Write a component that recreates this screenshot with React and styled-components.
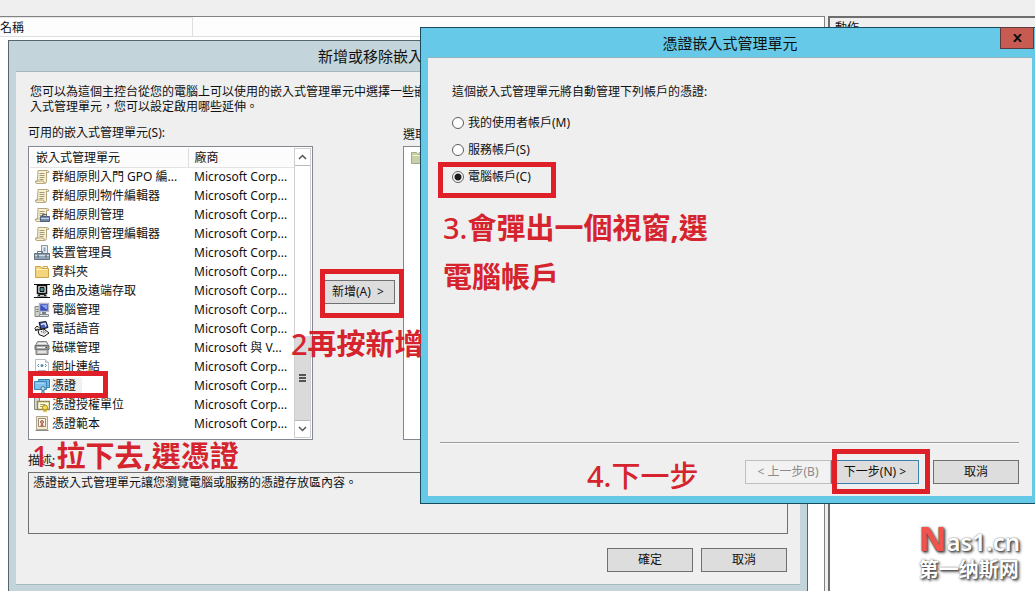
import React, { useState } from 'react'
import styled, { createGlobalStyle } from 'styled-components'

const GlobalStyle = createGlobalStyle`
* {
  box-sizing: border-box;
}
body {
  margin: 0;
  overflow: hidden;
  background: #efefef;
}
body, button, input, textarea {
  font-family: "Noto Sans", "Noto Sans CJK TC", sans-serif;
  font-size: 12px;
  line-height: 16px;
  color: #111;
}
`

const Desktop = styled.div`
  position: relative;
  display: flex;
  flex-direction: column;
  height: 100vh;
  overflow: hidden;
`

const Toolbar = styled.div`
  flex: none;
  height: 16px;
  background: #efefef;
`

const Panes = styled.div`
  display: flex;
  flex: 1;
  gap: 3px;
`

const ResultPane = styled.main`
  flex: 1;
  background: #fff;
  border-top: 1px solid #828282;
  border-right: 1px solid #828282;
`

const PaneHeader = styled.div`
  display: flex;
  height: 20px;
  border-bottom: 1px solid #dcdfe1;
  background: #fdfdfd;
`

const PaneColumn = styled.div`
  width: 193px;
  padding-top: 2px;
  border-top: 1px solid #e5e5e5;
  border-right: 1px solid #dcdfe1;
`

const ActionsPane = styled.aside`
  width: 207px;
  background: #fff;
  border-top: 2px solid #6e6e6e;
  border-left: 2px solid #6e6e6e;
`

const ActionsTitle = styled.div`
  padding: 2px 5px;
  background: #efefef;
`

const Window = styled.section`
  position: absolute;
  display: flex;
  flex-direction: column;
  border: 1px solid ${(p) => (p.$active ? '#174a5c' : '#56666c')};
  background: ${(p) => (p.$active ? '#66c9e8' : '#c3d5da')};
  padding: 0 7px 7px;
`

const SnapinWindow = styled(Window)`
  left: 8px;
  right: 227px;
  top: 40px;
`

const WizardWindow = styled(Window)`
  left: 420px;
  right: -5px;
  top: 27px;
`

const TitleBar = styled.header`
  position: relative;
  display: flex;
  align-items: center;
  justify-content: center;
  height: ${(p) => p.$height}px;
`

const Title = styled.h1`
  margin: 0;
  font-size: 15px;
  font-weight: 400;
  line-height: 18px;
`

const CloseButton = styled.button`
  position: absolute;
  top: -1px;
  right: -2px;
  display: flex;
  align-items: center;
  justify-content: center;
  width: 34px;
  height: 22px;
  padding: 0;
  border: 1px solid #5b3b3c;
  background: #c75b52;
`

const SnapinBody = styled.div`
  padding: 12px 12px 12px;
  border-top: 1px solid #a9b7bb;
  border-bottom: 1px solid #a5bac0;
  background: #efefef;
`

const Intro = styled.p`
  margin: 0 2px 10px;
  line-height: 15px;
  white-space: nowrap;
`

const Chooser = styled.div`
  display: flex;
`

const Available = styled.div`
  width: 285px;
`

const AddArea = styled.div`
  display: flex;
  align-items: center;
  justify-content: center;
  width: 90px;
  padding-top: 20px;
`

const Selected = styled.div`
  flex: 1;
`

const Caption = styled.div`
  height: 22px;
  padding-top: ${(p) => p.$drop}px;
`

const ListBox = styled.div`
  display: flex;
  height: 294px;
  padding: 1px;
  border: 1px solid #828790;
  background: #fff;
`

const SnapinTable = styled.table`
  flex: 1;
  align-self: flex-start;
  table-layout: fixed;
  border-collapse: collapse;

  th, td {
    height: 19px;
    padding: 0 0 0 6px;
    text-align: left;
    font-weight: 400;
    white-space: nowrap;
  }
  th {
    padding-top: 1px;
    background: #fcfcfc;
    border-bottom: 1px solid #e4e4e4;
  }
  th:first-child {
    width: 158px;
    border-right: 1px solid #dedede;
  }
  td:first-child {
    padding-left: 4px;
  }
`

const NameCell = styled.div`
  display: flex;
  align-items: center;
  gap: 1px;

  svg {
    flex: none;
  }
  span {
    padding: 0 6px 0 1px;
    background: ${(p) => (p.$selected ? '#f0f0f0' : 'transparent')};
  }
`

const ScrollBar = styled.div`
  display: flex;
  flex-direction: column;
  width: 17px;
  border: 1px solid #cfcfcf;
`

const ScrollButton = styled.button`
  display: flex;
  align-items: center;
  justify-content: center;
  height: 17px;
  padding: 0;
  border: 0;
  border-${(p) => p.$edge}: 1px solid #b9b9b9;
  background: #fff;
`

const ScrollTrack = styled.div`
  display: flex;
  flex: 1;
  flex-direction: column;
  justify-content: flex-end;
`

const ScrollThumb = styled.div`
  display: flex;
  align-items: center;
  justify-content: center;
  height: 84px;
  background: #dadada;
`

const SelectedRoot = styled.div`
  padding: 2px 5px;
`

const PushButton = styled.button`
  width: ${(p) => p.$width || 86}px;
  height: 24px;
  padding: 0;
  border: 1px solid ${(p) => (p.$primary ? '#3c7fb1' : '#707070')};
  background: #dddddd;
  white-space: pre;

  &:disabled {
    border-color: #bfbfbf;
    background: #f2f2f2;
    color: #8b8b8b;
  }
`

const NextButton = styled(PushButton)`
  margin-right: 14px;
`

const Field = styled.label`
  display: block;
  padding-top: 13px;
`

const Description = styled.textarea`
  display: block;
  width: 100%;
  height: 62px;
  margin-top: 3px;
  padding: 2px 4px;
  border: 1px solid #707070;
  background: transparent;
  resize: none;
  outline: none;
`

const Footer = styled.div`
  display: flex;
  justify-content: flex-end;
  gap: ${(p) => p.$gap}px;
  padding: ${(p) => p.$pad};
`

const WizardBody = styled.div`
  display: flex;
  flex-direction: column;
  height: 439px;
  padding: 26px 13px 12px 12px;
  border-top: 1px solid #8fb3c0;
  background: #efefef;
`

const Choices = styled.fieldset`
  display: flex;
  flex: 1;
  flex-direction: column;
  gap: 11px;
  margin: 0 12px;
  padding: 0;
  border: 0;

  legend {
    padding: 0 0 15px;
  }
`

const Choice = styled.label`
  display: flex;
  align-items: center;
  gap: 4px;
`

const Radio = styled.input`
  appearance: none;
  width: 12px;
  height: 12px;
  margin: 0;
  border: 1px solid #5d5d5d;
  border-radius: 50%;
  background: #fff;

  &:checked {
    background: radial-gradient(circle, #1c1c1c 3px, #fff 4px);
  }
`

const Divider = styled.hr`
  width: 100%;
  margin: 0;
  border: 0;
  border-top: 1px solid #9c9c9c;
  border-bottom: 1px solid #fbfbfb;
`

const Highlight = styled.div`
  position: absolute;
  left: ${(p) => p.$x}px;
  top: ${(p) => p.$y}px;
  width: ${(p) => p.$w}px;
  height: ${(p) => p.$h}px;
  border: 5px solid #df2029;
  pointer-events: none;
`

const Note = styled.p`
  position: absolute;
  left: ${(p) => p.$x}px;
  top: ${(p) => p.$y}px;
  margin: 0;
  color: #d5242e;
  font-size: 29px;
  font-weight: 500;
  line-height: 49px;
  white-space: nowrap;
  pointer-events: none;
`

const Watermark = styled.div`
  position: absolute;
  right: 15px;
  bottom: 9px;
  color: #fff;
  font-family: "Noto Sans", "Noto Sans CJK SC", sans-serif;
  font-weight: 700;
  text-shadow: 1px 1px 2px #444, 2px 2px 3px #777, 0 0 2px #888;
`

const SiteName = styled.div`
  font-size: 24px;
  font-weight: 600;
  line-height: 32px;

  b {
    color: #f4524d;
    font-size: 34px;
    font-weight: 700;
  }
`

const SiteSlogan = styled.div`
  font-size: 20px;
  line-height: 24px;
`

const Icon = ({ children }) => (
  <svg width="16" height="16" viewBox="0 0 16 16" aria-hidden="true">
    {children}
  </svg>
)

const Scroll = () => (
  <g>
    <path d="M4 1.500h9.500q1.500 0 1.200 2h-2.200v9q0 2-2 2H3q-2 0-1.500-2.500h2z" fill="#f8f0d2" stroke="#b5a67c" />
    <path d="M12.500 3.500V2.500M2 12h7.500q0 2 1.500 2" fill="none" stroke="#b5a67c" />
    <path d="M5.500 4.500h5M5.500 6.500h5M5.500 8.500h5M5.500 10.500h4" stroke="#a39a7c" />
  </g>
)

const Folder = ({ fill = '#f3d67c', edge = '#c9a44a' }) => (
  <g>
    <path d="M1.500 13.500v-11h5l1.500 2h6.500v9z" fill={fill} stroke={edge} />
    <path d="M9 2.500h4.500v2H9z" fill="#fff6cf" stroke={edge} />
    <path d="M2.500 5.500h11" stroke="#fff0b8" />
  </g>
)

const Seal = () => (
  <g>
    <path d="M10 11l-1 4.500 2-1 2 1-1-4.500z" fill="#d5b632" />
    <circle cx="11" cy="10.500" r="2.500" fill="#f4dc58" stroke="#a98a1e" />
  </g>
)

const icons = {
  scroll: <Scroll />,
  scrollTool: (
    <g>
      <Scroll />
      <path d="M8.500 9.500V7.500h4v2" fill="none" stroke="#55616f" />
      <path d="M6.500 9.500h9v5h-9z" fill="#7288a8" stroke="#4c5f7d" />
      <path d="M7 11.500h8" stroke="#c9d3e0" />
    </g>
  ),
  device: (
    <g>
      <path d="M7.500.5h6v9h-6z" fill="#e6edf3" stroke="#8796a3" />
      <path d="M9.500 2.500h2v4h-2z" fill="#8ba3b8" />
      <path d="M3.500 9V6.500h5V9" fill="none" stroke="#64717e" />
      <path d="M.5 8.500h15v6H.5z" fill="#93a5b7" stroke="#62717f" />
      <path d="M1 10.500h14" stroke="#d1dce6" />
      <path d="M4 9.500v3M12 9.500v3" stroke="#45515c" />
    </g>
  ),
  folder: <Folder />,
  routing: (
    <g>
      <path d="M0 1.500h16M0 14.500h16" stroke="#111" />
      <path d="M3.500 2.500h9v8h-9z" fill="#dfe5e5" stroke="#111" strokeWidth="1.500" />
      <path d="M6 4.500h4v4H6z" fill="#4b8e95" stroke="#111" />
      <path d="M5 11l-2 2.500h10.500L11 11z" fill="#222" />
      <path d="M6 12.500h4" stroke="#d5d5d5" />
    </g>
  ),
  computer: (
    <g>
      <path d="M1 4.500h5v10H1z" fill="#cfd2cc" stroke="#808780" />
      <path d="M5.500 1.500h9v8h-9z" fill="#3b50bd" stroke="#b3b8c4" strokeWidth="1.500" />
      <path d="M7 3l5 4h1V3z" fill="#8aa1f0" />
      <path d="M8 10h4v2H8z" fill="#777f8a" />
      <path d="M5.500 12.500h9v2h-9z" fill="#e2e3df" stroke="#858b90" />
      <path d="M2.500 7.500h2M2.500 9.500h2" stroke="#6f7673" />
    </g>
  ),
  phone: (
    <g>
      <path d="M5 1.500l7-1 2 6-7 2z" fill="#445ab0" stroke="#111" />
      <path d="M7 3.500l4-1 1 3" fill="none" stroke="#d3e1ff" strokeWidth="1.500" />
      <path d="M1 7.500q1-3 3-2l2 2-1.500 1.500L3 8l-1 2z" fill="#e6e6e6" stroke="#222" />
      <path d="M4 9l6-1 5 4-5 3.500-5-2z" fill="#f4f4f4" stroke="#111" />
      <path d="M7 10.500l4 2M9 9.500l3 2" stroke="#222" strokeDasharray="1 1" />
    </g>
  ),
  disk: (
    <g>
      <path d="M3.500 1.500h9l2 4h-13z" fill="#cdcdcd" stroke="#858585" />
      <path d="M1 5.500h14v4H1z" fill="#9a9a9a" stroke="#6a6a6a" />
      <path d="M4 3.500h8" stroke="#f3f3f3" />
      <path d="M2 9.500h12v5H2z" fill="#bdbdbd" stroke="#757575" />
      <path d="M3 7.500h8M4 12h8" stroke="#eee" strokeWidth="1.500" />
      <path d="M12 7.500h1" stroke="#333" />
    </g>
  ),
  link: (
    <g>
      <path d="M1.500.5h10l3 3v12h-13z" fill="#fff" stroke="#b4bfc8" />
      <path d="M11.500.5v3h3" fill="#dce5ec" stroke="#b4bfc8" />
      <path d="M5 5L3.500 6.500 5 8M11 5l1.500 1.500L11 8" fill="none" stroke="#597fa4" />
      <circle cx="8" cy="6.500" r="1.500" fill="#4f91a3" />
      <path d="M4 11.500h8" stroke="#a4b4c3" />
    </g>
  ),
  cert: (
    <g>
      <path d="M4.500 1.500h11v8h-11z" fill="#6db7e3" stroke="#337eaf" />
      <path d="M.5 3.500h12v8H.5z" fill="#7fc2ec" stroke="#3b86b5" />
      <path d="M2 5.500h8" stroke="#a4d8f5" />
      <path d="M8 11l-1 4.500 2-1 2 1-1-4.500z" fill="#6194b0" />
      <circle cx="9" cy="10.500" r="2" fill="#b6dfed" stroke="#467e9b" />
    </g>
  ),
  authority: (
    <g>
      <path d="M.5.5h5v12h-5z" fill="#d5d7d6" stroke="#858b89" />
      <path d="M3.500 4.500h12v8h-12z" fill="#fffbdc" stroke="#97864c" strokeWidth="1.500" />
      <path d="M6 7.500h5M6 9.500h3" stroke="#a1a076" />
      <Seal />
    </g>
  ),
  template: (
    <g>
      <path d="M2.500.5h11v13h-11z" fill="#f3ead3" stroke="#b0a48c" />
      <path d="M4.500 2.500h7v8h-7z" fill="#fffaf0" stroke="#a08974" />
      <circle cx="8" cy="6" r="1.500" fill="#e4b59c" stroke="#a35645" />
      <path d="M7 8l-1 3 2-1 2 1-1-3" fill="#b66b56" />
      <path d="M1.500 14.500h13" stroke="#8d8d86" />
    </g>
  ),
}

const CORP = 'Microsoft Corp...'

const snapins = [
  { icon: 'scroll', name: '群組原則入門 GPO 編...', vendor: CORP },
  { icon: 'scroll', name: '群組原則物件編輯器', vendor: CORP },
  { icon: 'scrollTool', name: '群組原則管理', vendor: CORP },
  { icon: 'scroll', name: '群組原則管理編輯器', vendor: CORP },
  { icon: 'device', name: '裝置管理員', vendor: CORP },
  { icon: 'folder', name: '資料夾', vendor: CORP },
  { icon: 'routing', name: '路由及遠端存取', vendor: CORP },
  { icon: 'computer', name: '電腦管理', vendor: CORP },
  { icon: 'phone', name: '電話語音', vendor: CORP },
  { icon: 'disk', name: '磁碟管理', vendor: 'Microsoft 與 V...' },
  { icon: 'link', name: '網址連結', vendor: CORP },
  { icon: 'cert', name: '憑證', vendor: CORP },
  { icon: 'authority', name: '憑證授權單位', vendor: CORP },
  { icon: 'template', name: '憑證範本', vendor: CORP },
]

const accounts = ['我的使用者帳戶(M)', '服務帳戶(S)', '電腦帳戶(C)']

const Chevron = ({ d }) => (
  <svg width="9" height="6" viewBox="0 0 9 6" aria-hidden="true">
    <path d={d} fill="none" stroke="#555" strokeWidth="1.500" />
  </svg>
)

const SnapinList = () => (
  <ListBox>
    <SnapinTable>
      <thead>
        <tr>
          <th>嵌入式管理單元</th>
          <th>廠商</th>
        </tr>
      </thead>
      <tbody>
        {snapins.map((item) => (
          <tr key={item.name}>
            <td>
              <NameCell $selected={item.name === '憑證'}>
                <Icon>{icons[item.icon]}</Icon>
                <span>{item.name}</span>
              </NameCell>
            </td>
            <td>{item.vendor}</td>
          </tr>
        ))}
      </tbody>
    </SnapinTable>
    <ScrollBar>
      <ScrollButton $edge="bottom" aria-label="向上捲動">
        <Chevron d="M1 5l3.500-3.500L8 5" />
      </ScrollButton>
      <ScrollTrack>
        <ScrollThumb>
          <svg width="7" height="9" viewBox="0 0 7 9" aria-hidden="true">
            <path d="M0 1h7M0 4h7M0 7h7" stroke="#555" strokeWidth="2" />
          </svg>
        </ScrollThumb>
      </ScrollTrack>
      <ScrollButton $edge="top" aria-label="向下捲動">
        <Chevron d="M1 1l3.500 3.500L8 1" />
      </ScrollButton>
    </ScrollBar>
  </ListBox>
)

const SnapinDialog = () => (
  <SnapinWindow>
    <TitleBar $height={30}>
      <Title>新增或移除嵌入式管理單元</Title>
    </TitleBar>
    <SnapinBody>
      <Intro>
        您可以為這個主控台從您的電腦上可以使用的嵌入式管理單元中選擇一些嵌
        <br />
        入式管理單元，您可以設定啟用哪些延伸。
      </Intro>
      <Chooser>
        <Available>
          <Caption $drop={1}>可用的嵌入式管理單元(S):</Caption>
          <SnapinList />
        </Available>
        <AddArea>
          <PushButton $width={74}>{'新增(A)  >'}</PushButton>
        </AddArea>
        <Selected>
          <Caption $drop={3}>選取</Caption>
          <ListBox>
            <SelectedRoot>
              <Icon>
                <Folder fill="#c9cfa9" edge="#a3a98a" />
              </Icon>
            </SelectedRoot>
          </ListBox>
        </Selected>
      </Chooser>
      <Field>
        描述:
        <Description readOnly value="憑證嵌入式管理單元讓您瀏覽電腦或服務的憑證存放區內容。" />
      </Field>
      <Footer $gap={8} $pad="14px 1px 0 0">
        <PushButton>確定</PushButton>
        <PushButton>取消</PushButton>
      </Footer>
    </SnapinBody>
  </SnapinWindow>
)

const WizardDialog = () => {
  const [account, setAccount] = useState(accounts[2])

  return (
    <WizardWindow $active>
      <TitleBar $height={29}>
        <Title>憑證嵌入式管理單元</Title>
        <CloseButton aria-label="關閉">
          <svg width="9" height="8" viewBox="0 0 9 8" aria-hidden="true">
            <path d="M1 0l7 8M8 0L1 8" stroke="#111" strokeWidth="2" />
          </svg>
        </CloseButton>
      </TitleBar>
      <WizardBody>
        <Choices>
          <legend>這個嵌入式管理單元將自動管理下列帳戶的憑證:</legend>
          {accounts.map((name) => (
            <Choice key={name}>
              <Radio
                type="radio"
                name="account"
                checked={account === name}
                onChange={() => setAccount(name)}
              />
              {name}
            </Choice>
          ))}
        </Choices>
        <Divider />
        <Footer $gap={0} $pad="16px 0 0">
          <PushButton disabled>{'< 上一步(B)'}</PushButton>
          <NextButton $primary $width={88}>{'下一步(N) >'}</NextButton>
          <PushButton>取消</PushButton>
        </Footer>
      </WizardBody>
    </WizardWindow>
  )
}

const App = () => (
  <>
    <GlobalStyle />
    <Desktop>
      <Toolbar />
      <Panes>
        <ResultPane>
          <PaneHeader>
            <PaneColumn>名稱</PaneColumn>
          </PaneHeader>
        </ResultPane>
        <ActionsPane>
          <ActionsTitle>動作</ActionsTitle>
        </ActionsPane>
      </Panes>

      <SnapinDialog />
      <WizardDialog />

      <Highlight $x={28} $y={371} $w={80} $h={27} />
      <Highlight $x={320} $y={269} $w={84} $h={49} />
      <Highlight $x={438} $y={162} $w={118} $h={36} />
      <Highlight $x={832} $y={449} $w={98} $h={45} />

      <Note $x={32} $y={431}>
        1.<b>拉下去,選憑證</b>
      </Note>
      <Note $x={291} $y={319}>
        2<b>再按新增</b>
      </Note>
      <Note $x={443} $y={203}>
        3.<b>會彈出一個視窗,選</b>
        <br />
        <b>電腦帳戶</b>
      </Note>
      <Note $x={587} $y={451}>4.下一步</Note>

      <Watermark>
        <SiteName>
          <b>N</b>as1.cn
        </SiteName>
        <SiteSlogan>第一纳斯网</SiteSlogan>
      </Watermark>
    </Desktop>
  </>
)

export default App
